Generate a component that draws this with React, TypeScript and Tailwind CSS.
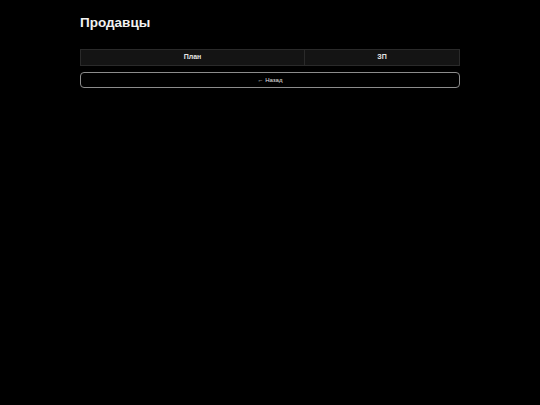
export default function App() {
  return (
    <div className="min-h-screen w-full bg-black text-white" style={{ fontFamily: '"Liberation Sans", Arial, sans-serif' }}>
      <div className="mx-auto w-[380px] pt-[14px]">
        <h1 className="text-[13.5px] font-bold leading-[18px] text-[#f2f2f2]">Продавцы</h1>

        <div className="mt-[17px] flex h-[17px] border border-[#2a2a2a] bg-[#141414]">
          <div className="flex w-[224px] items-center justify-center border-r border-[#2a2a2a] text-[7px] font-bold text-[#e5e5e5]">
            План
          </div>
          <div className="flex flex-1 items-center justify-center text-[7px] font-bold text-[#e5e5e5]">
            ЗП
          </div>
        </div>

        <button className="mt-[6px] flex h-[16px] w-full items-center justify-center rounded-[4px] border border-[#8c8c8c] bg-black text-[6px] text-[#e5e5e5]">
          ← Назад
        </button>
      </div>
    </div>
  );
}
